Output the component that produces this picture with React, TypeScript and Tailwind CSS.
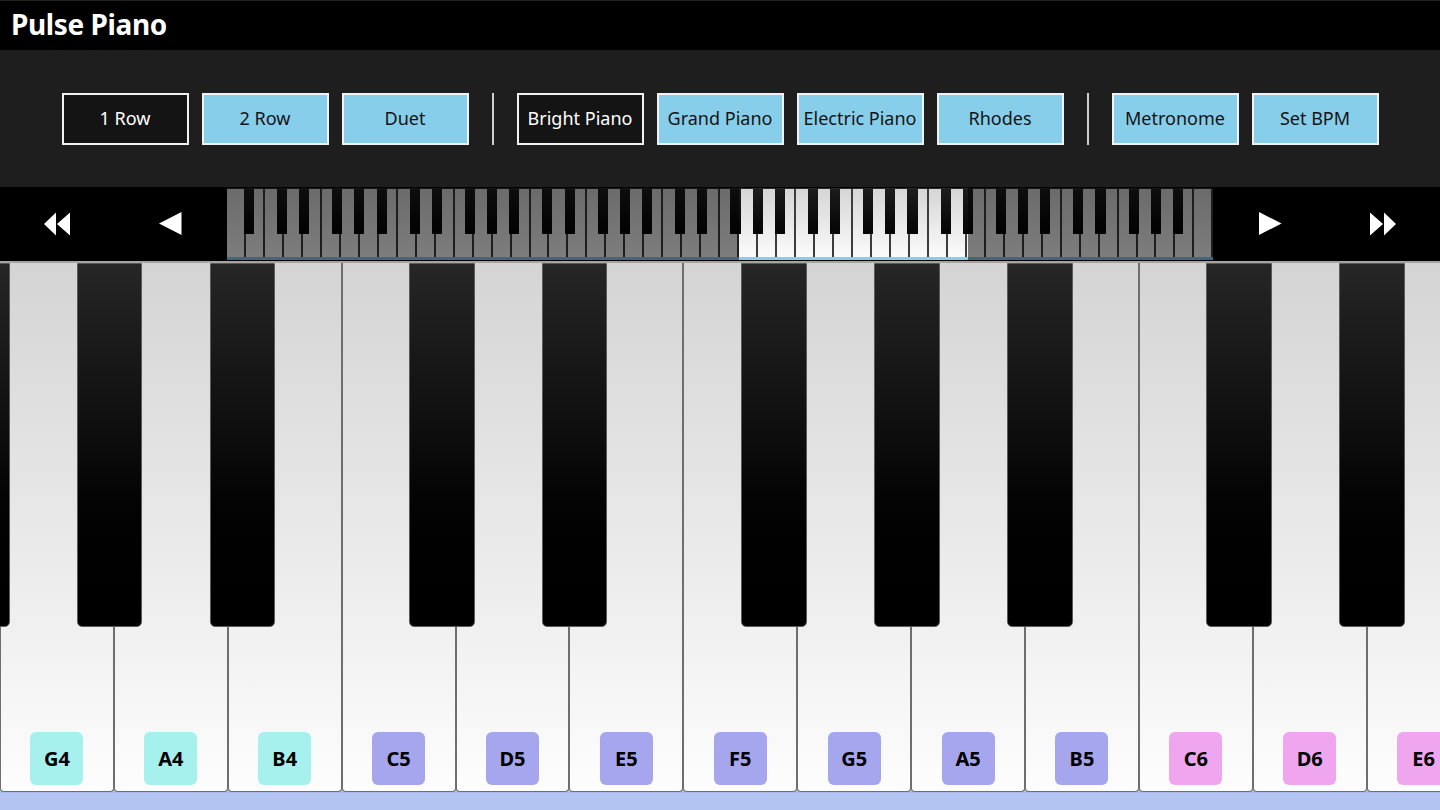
import React from 'react';

// big keyboard geometry
const WHITE_W = 113.9;
const SEMI_W = (WHITE_W * 7) / 12;
const C4_X = -4 * WHITE_W;

// mini keyboard geometry (88 keys, 52 whites)
const MINI_W = 986;
const MINI_WHITE = MINI_W / 52;
const MINI_SEMI = (MINI_WHITE * 7) / 12;
const VIEW_FROM = 27; // G4
const VIEW_TO = 39; // up to (not incl.) E6

const isBlack = (midi: number) => [1, 3, 6, 8, 10].includes(midi % 12);

const miniKeys = Array.from({ length: 88 }, (_, i) => 21 + i);
const miniBlacks = miniKeys
  .filter(isBlack)
  .map((m) => {
    const octave = Math.floor((m - 12) / 12);
    return octave * 7 * MINI_WHITE + (m % 12) * MINI_SEMI - 5 * MINI_WHITE;
  });

type WhiteKey = { name: string; tone: 'cyan' | 'violet' | 'pink' };

const whiteKeys: WhiteKey[] = [
  { name: 'G4', tone: 'cyan' },
  { name: 'A4', tone: 'cyan' },
  { name: 'B4', tone: 'cyan' },
  { name: 'C5', tone: 'violet' },
  { name: 'D5', tone: 'violet' },
  { name: 'E5', tone: 'violet' },
  { name: 'F5', tone: 'violet' },
  { name: 'G5', tone: 'violet' },
  { name: 'A5', tone: 'violet' },
  { name: 'B5', tone: 'violet' },
  { name: 'C6', tone: 'pink' },
  { name: 'D6', tone: 'pink' },
  { name: 'E6', tone: 'pink' },
];

// semitones above C4
const blackKeys = [6, 8, 10, 13, 15, 18, 20, 22, 25, 27];

const toneClass: Record<WhiteKey['tone'], string> = {
  cyan: 'bg-[#a6f0ee]',
  violet: 'bg-[#a6a6ee]',
  pink: 'bg-[#f0a6ee]',
};

const groups = [
  [
    { label: '1 Row', active: true },
    { label: '2 Row' },
    { label: 'Duet' },
  ],
  [
    { label: 'Bright Piano', active: true },
    { label: 'Grand Piano' },
    { label: 'Electric Piano' },
    { label: 'Rhodes' },
  ],
  [{ label: 'Metronome' }, { label: 'Set BPM' }],
];

function ToolButton({ label, active }: { label: string; active?: boolean }) {
  return (
    <button
      className={
        active
          ? 'flex h-[52px] w-[127px] items-center justify-center border-2 border-[#f2f2f2] bg-[#141414] text-[18px] text-white'
          : 'flex h-[52px] w-[127px] items-center justify-center border-2 border-[#f2f2f2] bg-[#87ceeb] text-[18px] text-[#141414]'
      }
    >
      {label}
    </button>
  );
}

function NavIcon({ kind }: { kind: 'rew' | 'prev' | 'next' | 'ff' }) {
  return (
    <svg width="28" height="24" viewBox="0 0 28 24" className="text-white" fill="currentColor">
      {kind === 'rew' && (
        <>
          <polygon points="1,12 13,0.5 13,23.5" />
          <polygon points="14,12 27,0.5 27,23.5" />
        </>
      )}
      {kind === 'prev' && <polygon points="3,11.5 25.5,0 25.5,23" />}
      {kind === 'next' && <polygon points="3,0 25.5,11.5 3,23" />}
      {kind === 'ff' && (
        <>
          <polygon points="1,0.5 14,12 1,23.5" />
          <polygon points="15,0.5 27,12 15,23.5" />
        </>
      )}
    </svg>
  );
}

function MiniKeyboard() {
  return (
    <div className="relative h-[73px] w-[986px] shrink-0 bg-black">
      <div className="flex h-[69px] border-t border-[#2a2a2a]">
        {Array.from({ length: 52 }, (_, i) => (
          <div
            key={i}
            className="h-full flex-1 border-r-2 border-[#3c3c3c] bg-gradient-to-b from-[#d6d6d6] to-[#fbfbfb]"
          />
        ))}
      </div>
      <div className="h-[3px] bg-[#87ceeb]" />
      {miniBlacks.map((x, i) => (
        <div
          key={i}
          className="absolute top-[1px] h-[45px] bg-gradient-to-b from-[#1c1c1c] to-[#050505]"
          style={{ left: x + 1, width: MINI_SEMI - 1 }}
        />
      ))}
      {/* dimmed out-of-view regions */}
      <div
        className="absolute left-0 top-0 h-[72px] bg-black/50"
        style={{ width: VIEW_FROM * MINI_WHITE }}
      />
      <div
        className="absolute right-0 top-0 h-[72px] bg-black/50"
        style={{ width: (52 - VIEW_TO) * MINI_WHITE - 1 }}
      />
    </div>
  );
}

export default function App() {
  return (
    <div
      className="flex h-[810px] w-[1440px] flex-col overflow-hidden bg-black select-none"
      style={{ fontFamily: '"Noto Sans", "Open Sans", sans-serif' }}
    >
      {/* title bar */}
      <div className="flex h-[50px] shrink-0 items-center border-t border-[#222] bg-black pb-[4px] pl-[11px]">
        <span className="text-[28px] font-bold leading-none tracking-[-0.4px] text-white">Pulse Piano</span>
      </div>

      {/* toolbar */}
      <div className="flex h-[137px] shrink-0 items-center justify-center bg-[#1e1e1e]">
        {groups.map((g, gi) => (
          <React.Fragment key={gi}>
            {gi > 0 && <div className="mx-[23px] h-[52px] w-[2px] bg-[#cfcfcf]" />}
            <div className="flex gap-[13px]">
              {g.map((b) => (
                <ToolButton key={b.label} label={b.label} active={b.active} />
              ))}
            </div>
          </React.Fragment>
        ))}
      </div>

      {/* navigator strip */}
      <div className="flex h-[74px] shrink-0 items-start bg-black pt-[1px]">
        <div className="flex h-[72px] w-[227px] shrink-0">
          <div className="flex flex-1 items-center justify-center">
            <NavIcon kind="rew" />
          </div>
          <div className="flex flex-1 items-center justify-center">
            <NavIcon kind="prev" />
          </div>
        </div>
        <MiniKeyboard />
        <div className="flex h-[72px] flex-1">
          <div className="flex flex-1 items-center justify-center">
            <NavIcon kind="next" />
          </div>
          <div className="flex flex-1 items-center justify-center">
            <NavIcon kind="ff" />
          </div>
        </div>
      </div>
      <div className="h-[2px] shrink-0 bg-[#a4a4a4]" />

      {/* main keyboard */}
      <div className="relative h-[530px] shrink-0 bg-[#a8bbee]">
        <div className="flex h-[529px]">
          {whiteKeys.map((k) => (
            <div
              key={k.name}
              className="flex h-full shrink-0 flex-col items-center justify-end rounded-b-[4px] border-x border-b border-[#6e6e6e] bg-gradient-to-b from-[#d4d4d4] to-[#fdfdfd] pb-[6px]"
              style={{ width: WHITE_W }}
            >
              <div
                className={`flex h-[53px] w-[53px] items-center justify-center rounded-[6px] text-[20px] font-bold text-black ${toneClass[k.tone]}`}
              >
                {k.name}
              </div>
            </div>
          ))}
        </div>
        {blackKeys.map((s) => (
          <div
            key={s}
            className="absolute top-0 h-[364px] rounded-b-[5px] border border-[#5a5a5a] bg-gradient-to-b from-[#262626] via-[#0c0c0c] to-black"
            style={{ left: C4_X + s * SEMI_W + 1, width: SEMI_W - 1 }}
          />
        ))}
      </div>
      <div className="flex-1 bg-[#b4c4f2]" />
    </div>
  );
}
